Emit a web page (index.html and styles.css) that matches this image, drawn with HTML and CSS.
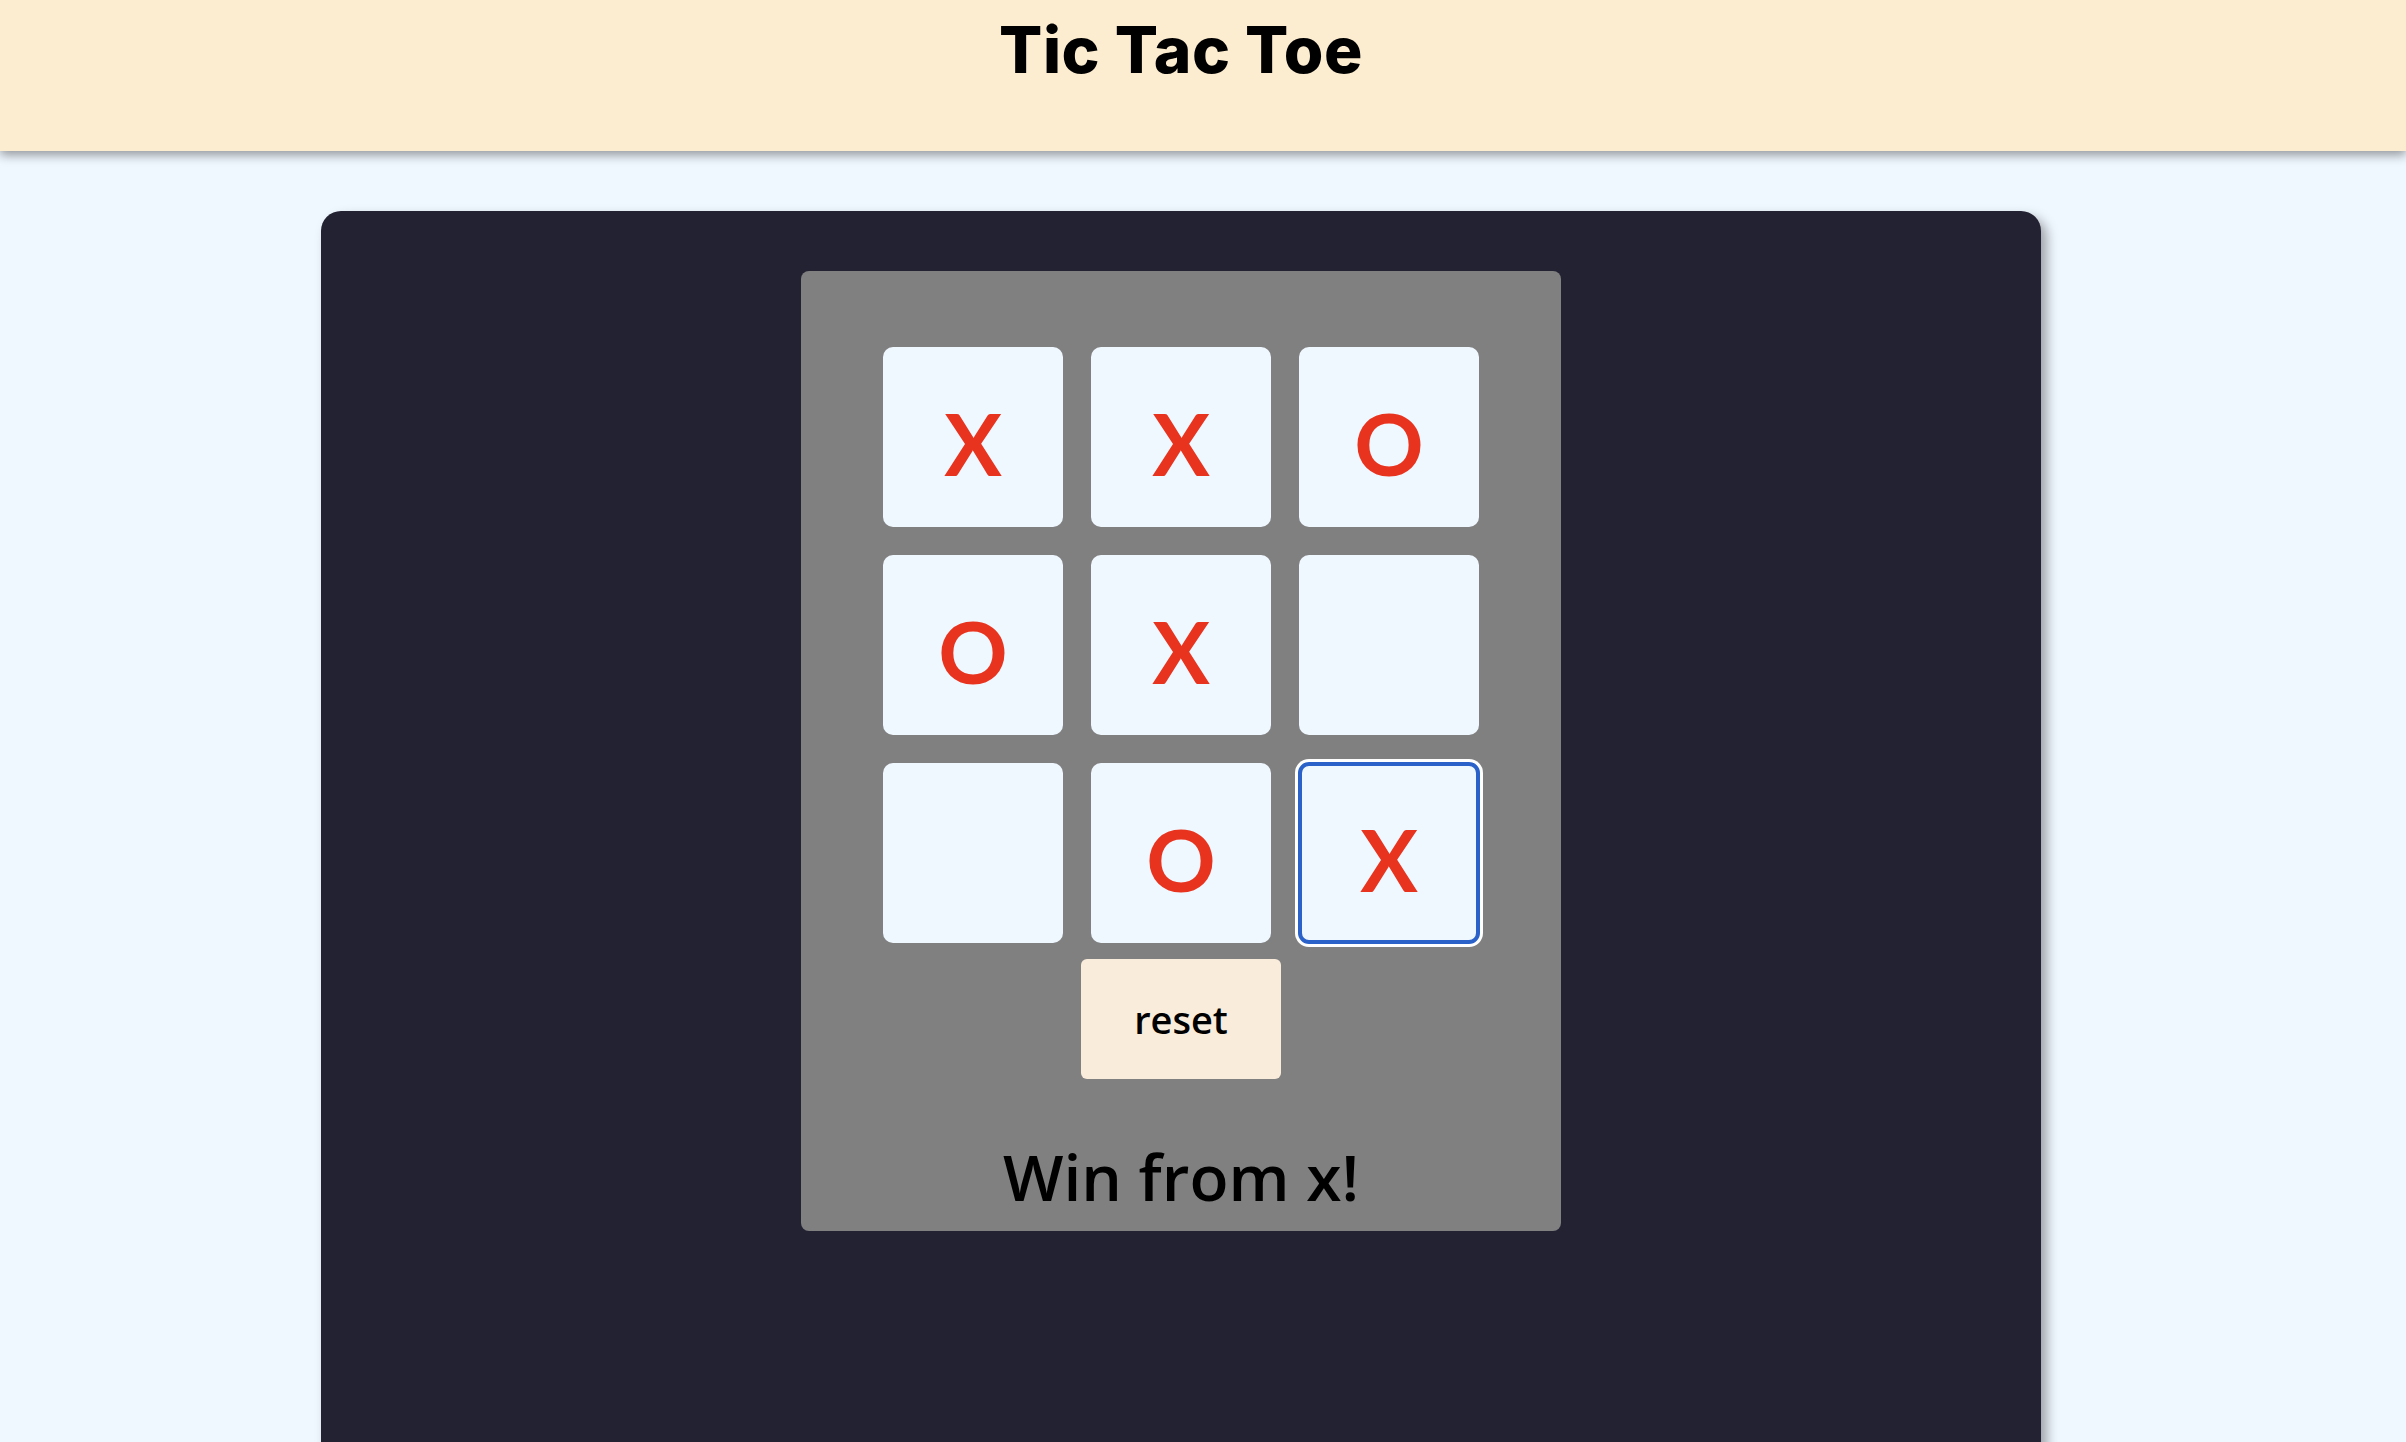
FILE: index.html
```html
<!DOCTYPE html>
<html lang="en">
<head>
<meta charset="utf-8">
<title>Tic Tac Toe</title>
<link rel="stylesheet" href="styles.css">
</head>
<body>
<header class="topbar">
  <h1 class="title">Tic Tac Toe</h1>
</header>
<main class="page">
  <section class="card">
    <div class="panel">
      <div class="column">
        <div class="board">
          <button class="cell">X</button>
          <button class="cell">X</button>
          <button class="cell">O</button>
          <button class="cell">O</button>
          <button class="cell">X</button>
          <button class="cell"></button>
          <button class="cell"></button>
          <button class="cell">O</button>
          <button class="cell cell-focus">X</button>
        </div>
        <button class="reset">reset</button>
        <h2 class="status">Win from x!</h2>
      </div>
    </div>
  </section>
</main>
</body>
</html>
```
FILE: styles.css
```css
html, body {
  margin: 0;
  padding: 0;
}
body {
  background: #f0f8ff;
  font-family: "Open Sans", "Noto Sans", sans-serif;
  overflow: hidden;
  height: 1442px;
}
.topbar {
  height: 151px;
  background: #fcecd0;
  box-shadow: 0 4px 10px rgba(0, 0, 0, 0.4);
  position: relative;
  z-index: 1;
}
.title {
  margin: 0;
  padding: 8px 44px 0 0;
  text-align: center;
  font-family: "Inter", sans-serif;
  font-weight: 800;
  font-size: 64px;
  line-height: 84px;
  letter-spacing: 0.5px;
  color: #000;
}
.page {
  padding-top: 60px;
}
.card {
  margin-left: 321px;
  width: 1720px;
  height: 1400px;
  background: #232233;
  border-radius: 20px;
  box-shadow: 6px 6px 12px rgba(0, 0, 0, 0.35);
  padding-top: 60px;
  box-sizing: border-box;
}
.panel {
  margin-left: 480px;
  width: 760px;
  height: 960px;
  background: #808080;
  border-radius: 8px;
  padding: 76px 82px 0 82px;
  box-sizing: border-box;
}
.column {
  width: 596px;
  display: flex;
  flex-direction: column;
  align-items: center;
}
.board {
  display: grid;
  grid-template-columns: repeat(3, 180px);
  grid-auto-rows: 180px;
  gap: 28px;
}
.cell {
  border: none;
  margin: 0;
  padding: 12px 0 0 0;
  background: #f0f8ff;
  border-radius: 10px;
  font-family: "Lato", sans-serif;
  font-weight: 700;
  font-size: 86px;
  line-height: 1;
  color: #e8341f;
  display: flex;
  align-items: center;
  justify-content: center;
}
.cell-focus {
  outline: 4px solid #2a62c9;
  outline-offset: -3px;
  box-shadow: 0 0 0 4px #ffffff;
}
.reset {
  margin-top: 16px;
  width: 200px;
  height: 120px;
  border: none;
  border-radius: 6px;
  background: #f9ecdb;
  font-family: "Open Sans", sans-serif;
  font-weight: 600;
  font-size: 38px;
  color: #000;
  padding: 0;
}
.status {
  margin: 53px 0 0 0;
  font-family: "Open Sans", sans-serif;
  font-weight: 600;
  font-size: 64px;
  line-height: 90px;
  color: #000;
}
```
